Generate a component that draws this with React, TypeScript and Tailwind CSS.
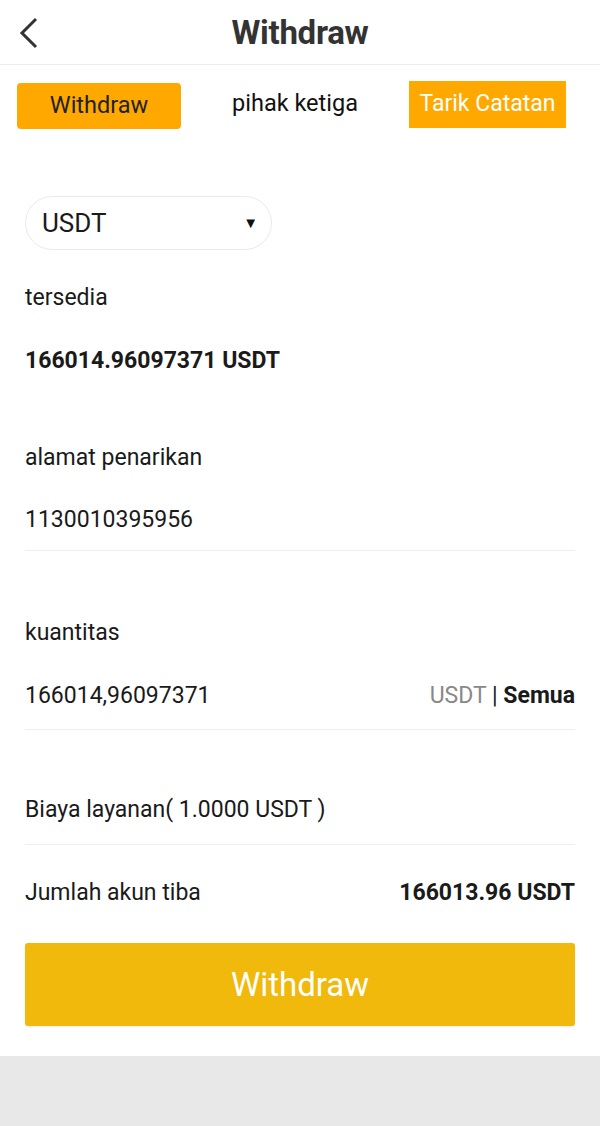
export default function App() {
  return (
    <div className="min-h-screen flex flex-col bg-[#e8e8e8] font-['Roboto',sans-serif] text-[#1a1a1a]">
      <div className="bg-white">
        {/* header */}
        <div className="grid grid-cols-[64px_1fr_64px] items-center h-[65px] border-b border-[#ececec]">
          <button className="flex items-center justify-center h-full">
            <svg width="22" height="32" viewBox="0 0 22 32" fill="none" className="-ml-[6px] mt-[1px]">
              <path d="M18 2 L4 16 L18 30" stroke="#333" strokeWidth="3" />
            </svg>
          </button>
          <h1 className="text-center text-[33px] font-bold text-[#333] leading-none tracking-[-0.3px]">Withdraw</h1>
          <div />
        </div>

        {/* tabs */}
        <div className="flex items-center mt-[15px] pl-[17px] pr-[34px] h-[48px]">
          <button className="w-[164px] h-[46px] mt-[3px] rounded-[4px] bg-[#ffa800] text-[23.5px] text-[#222]">
            Withdraw
          </button>
          <div className="flex-1 text-center text-[23.5px] text-[#111]">pihak ketiga</div>
          <button className="w-[157px] h-[47px] bg-[#ffa800] text-[23px] text-white">Tarik Catatan</button>
        </div>

        <div className="px-[25px] pb-[30px]">
          {/* coin select */}
          <div className="mt-[68px] w-[247px] h-[54px] rounded-full border border-[#eaeaea] flex items-center justify-between pl-[16px] pr-[13px]">
            <span className="text-[26px] text-[#1a1a1a]">USDT</span>
            <span className="text-[15px] text-[#111]">▼</span>
          </div>

          <div className="mt-[23px] h-[50px] flex items-center text-[23px]">tersedia</div>
          <div className="h-[76px] flex items-center text-[23px] font-bold">166014.96097371 USDT</div>

          <div className="mt-[34px] h-[50px] flex items-center text-[23px]">alamat penarikan</div>
          <div className="mt-[7px] h-[61px] flex items-center text-[23px] border-b border-[#eeeeee]">1130010395956</div>

          <div className="mt-[57px] h-[50px] flex items-center text-[23px]">kuantitas</div>
          <div className="mt-[6px] h-[66px] flex items-center justify-between text-[23px] border-b border-[#eeeeee]">
            <span>166014,96097371</span>
            <span>
              <span className="text-[#888]">USDT</span> | <span className="font-bold">Semua</span>
            </span>
          </div>

          <div className="mt-[47px] h-[68px] flex items-center text-[23px] border-b border-[#eeeeee]">
            Biaya layanan( 1.0000 USDT )
          </div>

          <div className="mt-[23px] h-[50px] flex items-center justify-between text-[23px]">
            <span>Jumlah akun tiba</span>
            <span className="font-bold">166013.96 USDT</span>
          </div>

          <button className="mt-[25px] w-full h-[83px] rounded-[3px] bg-[#f0b90b] text-white text-[33px] shadow-[0_1px_2px_rgba(0,0,0,0.08)]">
            Withdraw
          </button>
        </div>
      </div>
      <div className="flex-1" />
    </div>
  );
}
